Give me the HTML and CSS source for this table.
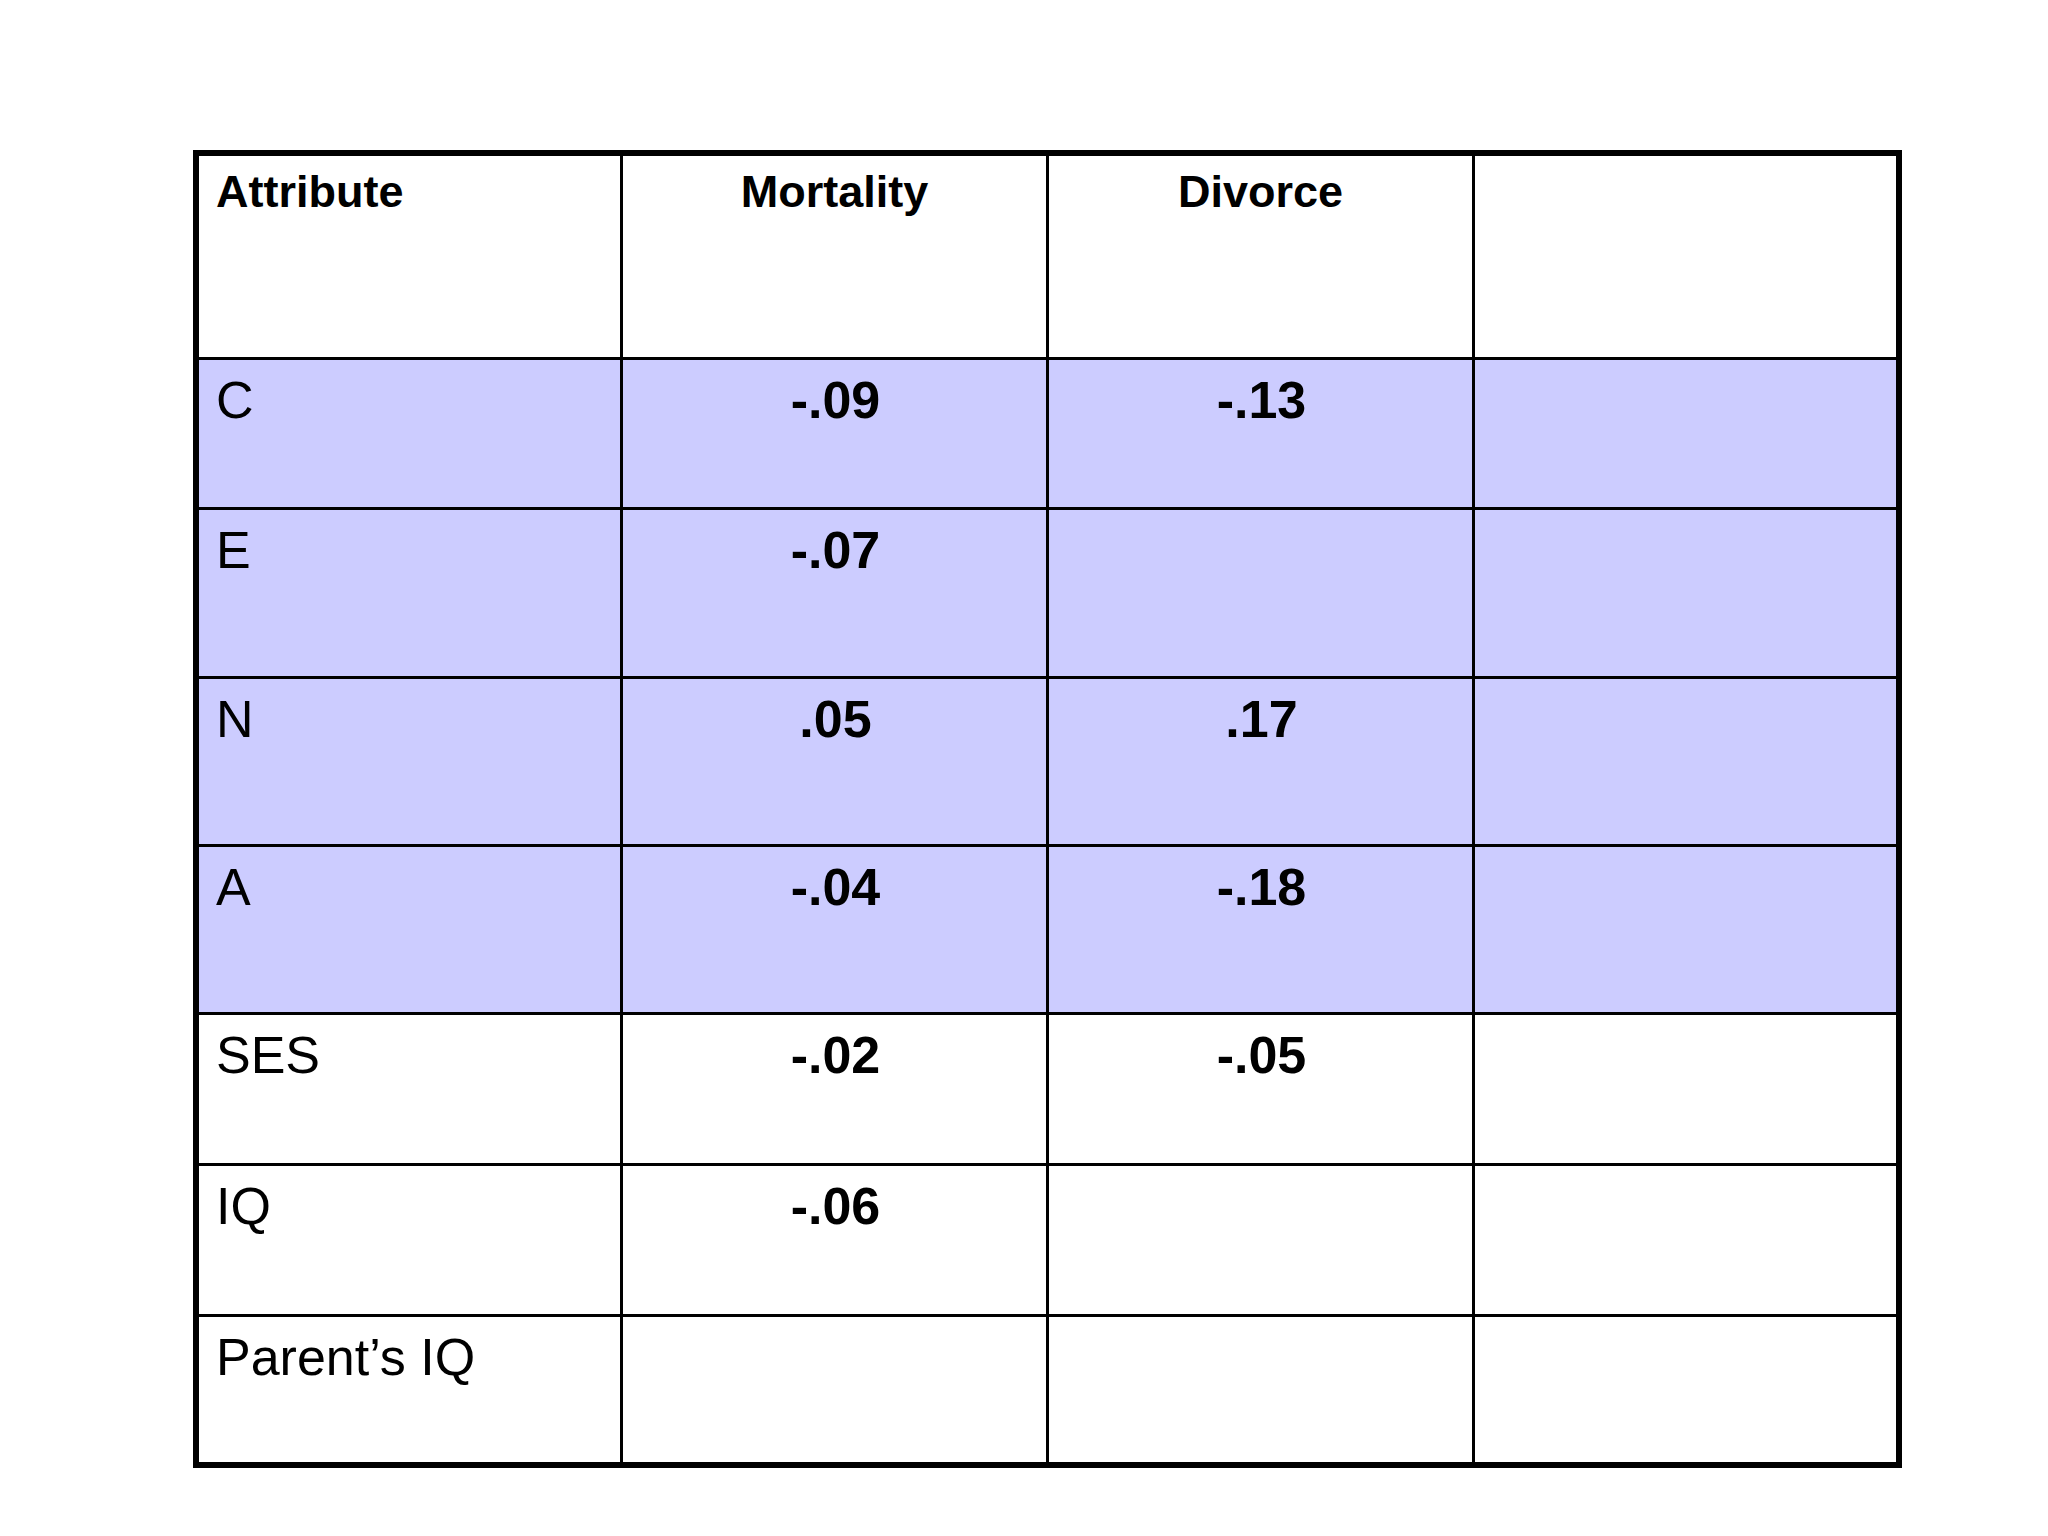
FILE: index.html
```html
<!DOCTYPE html>
<html lang="en">
<head>
<meta charset="utf-8">
<title>Attribute table</title>
<link rel="stylesheet" href="styles.css">
</head>
<body>
<div class="page">
  <div class="grid">
    <div class="cell head">Attribute</div>
    <div class="cell head center">Mortality</div>
    <div class="cell head center">Divorce</div>
    <div class="cell head"></div>

    <div class="cell hl">C</div>
    <div class="cell hl num">-.09</div>
    <div class="cell hl num">-.13</div>
    <div class="cell hl"></div>

    <div class="cell hl">E</div>
    <div class="cell hl num">-.07</div>
    <div class="cell hl num"></div>
    <div class="cell hl"></div>

    <div class="cell hl">N</div>
    <div class="cell hl num">.05</div>
    <div class="cell hl num">.17</div>
    <div class="cell hl"></div>

    <div class="cell hl">A</div>
    <div class="cell hl num">-.04</div>
    <div class="cell hl num">-.18</div>
    <div class="cell hl"></div>

    <div class="cell">SES</div>
    <div class="cell num">-.02</div>
    <div class="cell num">-.05</div>
    <div class="cell"></div>

    <div class="cell">IQ</div>
    <div class="cell num">-.06</div>
    <div class="cell num"></div>
    <div class="cell"></div>

    <div class="cell">Parent’s IQ</div>
    <div class="cell num"></div>
    <div class="cell num"></div>
    <div class="cell"></div>
  </div>
</div>
</body>
</html>
```
FILE: styles.css
```css
html, body {
  margin: 0;
  padding: 0;
  background: #ffffff;
}

body {
  font-family: "Liberation Sans", Arial, sans-serif;
  color: #000000;
}

.page {
  padding: 150px 0 0 193px;
}

.grid {
  width: 1697px;
  display: grid;
  grid-template-columns: 421px 423px 423px 421px;
  grid-template-rows: 201px 147px 166px 165px 165px 148px 148px 145px;
  column-gap: 3px;
  row-gap: 3px;
  background: #000000;
  border: 6px solid #000000;
}

.cell {
  background: #ffffff;
  padding: 10px 16px 0 17px;
  font-size: 52px;
  line-height: normal;
  white-space: nowrap;
}

.cell.hl {
  background: #ccccff;
}

.cell.head {
  font-size: 45px;
  font-weight: bold;
  padding-top: 10px;
  padding-left: 17px;
}

.cell.center {
  text-align: center;
  padding-left: 16px;
}

.cell.num {
  font-weight: bold;
  text-align: center;
  padding-left: 18px;
}
```
